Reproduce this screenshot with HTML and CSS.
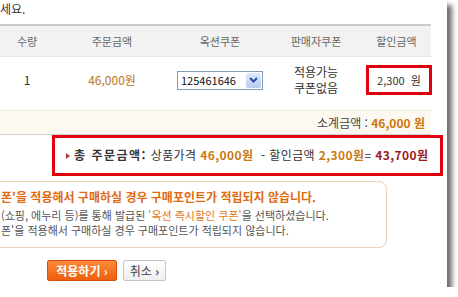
FILE: index.html
```html
<!DOCTYPE html>
<html lang="ko">
<head>
    <meta charset="UTF-8">
    <title>쿠폰 적용</title>
    <link rel="stylesheet" href="styles.css">
</head>
<body>
    <div class="popup">
        <p class="guide">세요.</p>

        <table class="coupon-table">
            <colgroup>
                <col class="c-qty">
                <col class="c-price">
                <col class="c-auction">
                <col class="c-seller">
                <col class="c-discount">
            </colgroup>
            <thead>
                <tr>
                    <th>수량</th>
                    <th>주문금액</th>
                    <th>옥션쿠폰</th>
                    <th>판매자쿠폰</th>
                    <th>할인금액</th>
                </tr>
            </thead>
            <tbody>
                <tr>
                    <td>1</td>
                    <td class="price">46,000원</td>
                    <td>
                        <span class="select">
                            <span class="select-value">125461646</span>
                            <span class="select-arrow">
                                <svg width="9" height="6" viewBox="0 0 9 6"><path d="M1 1 L4.5 4.5 L8 1" fill="none" stroke="#2b4f9c" stroke-width="2"/></svg>
                            </span>
                        </span>
                    </td>
                    <td class="seller">적용가능<br>쿠폰없음</td>
                    <td><span class="discount-box">2,300&nbsp;&nbsp;원</span></td>
                </tr>
            </tbody>
        </table>

        <div class="subtotal">소계금액 : <b>46,000 원</b></div>

        <div class="total"><span class="arrow"></span><b class="total-label">총 주문금액:</b> 상품가격 <b class="orange">46,000원</b> &nbsp;- 할인금액 <b class="orange">2,300원</b>= <b class="red">43,700원</b></div>

        <div class="notice">
            <p class="notice-title">폰'을 적용해서 구매하실 경우 구매포인트가 적립되지 않습니다.</p>
            <p class="notice-text">(쇼핑, 에누리 등)를 통해 발급된 <span class="quote">'옥션 즉시할인 쿠폰'</span>을 선택하셨습니다.</p>
            <p class="notice-text">폰'을 적용해서 구매하실 경우 구매포인트가 적립되지 않습니다.</p>
        </div>

        <div class="buttons">
            <button class="btn btn-apply">적용하기 <span class="chev">&rsaquo;</span></button>
            <button class="btn btn-cancel">취소 <span class="chev">&rsaquo;</span></button>
        </div>
    </div>
</body>
</html>
```

FILE: styles.css
```css
body {
    margin: 0;
    background: #fff;
    font-family: "Noto Sans CJK KR", "Noto Sans", sans-serif;
    font-size: 12px;
    color: #333;
    overflow: hidden;
}
.popup {
    width: 447px;
    height: 287px;
    background: #fff;
    box-shadow: 5px 5px 5px rgba(60, 60, 60, 0.75);
    overflow: hidden;
}
.guide {
    margin: 0;
    line-height: 17px;
    color: #333;
}
.coupon-table {
    margin-top: 7px;
    width: 431px;
    border-collapse: collapse;
    table-layout: fixed;
}
.c-qty { width: 54px; }
.c-price { width: 116px; }
.c-auction { width: 100px; }
.c-seller { width: 92px; }
.c-discount { width: 69px; }
.coupon-table th {
    height: 30px;
    padding: 0;
    background: #f2f2f2;
    border-top: 2px solid #cacaca;
    border-bottom: 1px solid #e6e6e6;
    font-size: 11px;
    font-weight: normal;
    color: #666;
}
.coupon-table td {
    height: 45px;
    padding: 0;
    text-align: center;
    vertical-align: middle;
}
.coupon-table .price {
    color: #b9772a;
}
.coupon-table .seller {
    line-height: 16px;
    color: #333;
}
.select {
    display: inline-flex;
    align-items: center;
    justify-content: space-between;
    width: 84px;
    height: 17px;
    border: 1px solid #7f9db9;
    background: #fff;
    text-align: left;
    vertical-align: middle;
}
.select-value {
    padding-left: 3px;
    font-size: 11px;
    color: #111;
}
.select-arrow {
    display: flex;
    align-items: center;
    justify-content: center;
    width: 15px;
    height: 15px;
    margin-right: 1px;
    background: linear-gradient(#dfe9fb, #b7ccf2);
    border-radius: 2px;
}
.discount-box {
    display: inline-block;
    width: 60px;
    height: 24px;
    line-height: 24px;
    border: 3px solid #e10010;
    margin-left: 4px;
    font-size: 11px;
    color: #333;
}
.subtotal {
    margin-top: 8px;
    width: 431px;
    height: 25px;
    line-height: 23px;
    box-sizing: border-box;
    border-top: 1px solid #f1ece4;
    border-bottom: 1px solid #cfcfcf;
    background: #fdf9f1;
    text-align: right;
    padding-right: 6px;
    color: #444;
}
.subtotal b {
    color: #d2760e;
}
.total {
    margin-left: 52px;
    width: 391px;
    height: 41px;
    box-sizing: border-box;
    border: 3px solid #e10010;
    padding-left: 11px;
    line-height: 34px;
    white-space: nowrap;
    letter-spacing: 0.4px;
    color: #333;
}
.total .arrow {
    display: inline-block;
    width: 0;
    height: 0;
    border-left: 4px solid #b03a3a;
    border-top: 3px solid transparent;
    border-bottom: 3px solid transparent;
    margin-right: 4px;
    vertical-align: 1px;
}
.total-label {
    letter-spacing: 1.5px;
    color: #333;
}
.total .orange {
    color: #c97a14;
}
.total .red {
    color: #9c1a1f;
}
.notice {
    margin: 5px 0 0 -12px;
    width: 399px;
    height: 67px;
    box-sizing: border-box;
    border: 1px solid #f0cfb2;
    border-radius: 8px;
    padding: 6px 0 0 12px;
    background: #fff;
}
.notice p {
    margin: 0;
    white-space: nowrap;
}
.notice-title {
    font-weight: bold;
    color: #de6a12;
    line-height: 17px;
    margin-bottom: 3px !important;
}
.notice-text {
    font-size: 11px;
    line-height: 15px;
    color: #555;
}
.notice-text:first-of-type {
    text-indent: -2px;
}
.notice .quote {
    color: #e0791c;
}
.buttons {
    display: flex;
    gap: 6px;
    margin: 12px 0 0 47px;
}
.btn {
    height: 21px;
    padding: 0;
    font-family: inherit;
    font-size: 12px;
    line-height: 19px;
    border-radius: 2px;
    cursor: pointer;
}
.btn-apply {
    width: 70px;
    border: 1px solid #d0500a;
    background: linear-gradient(#fb8a3c, #ee5f0c);
    color: #fff;
    font-weight: bold;
}
.btn-cancel {
    width: 43px;
    border: 1px solid #c4c4c4;
    background: linear-gradient(#fff, #efefef);
    color: #444;
}
.chev {
    font-weight: bold;
}
```
